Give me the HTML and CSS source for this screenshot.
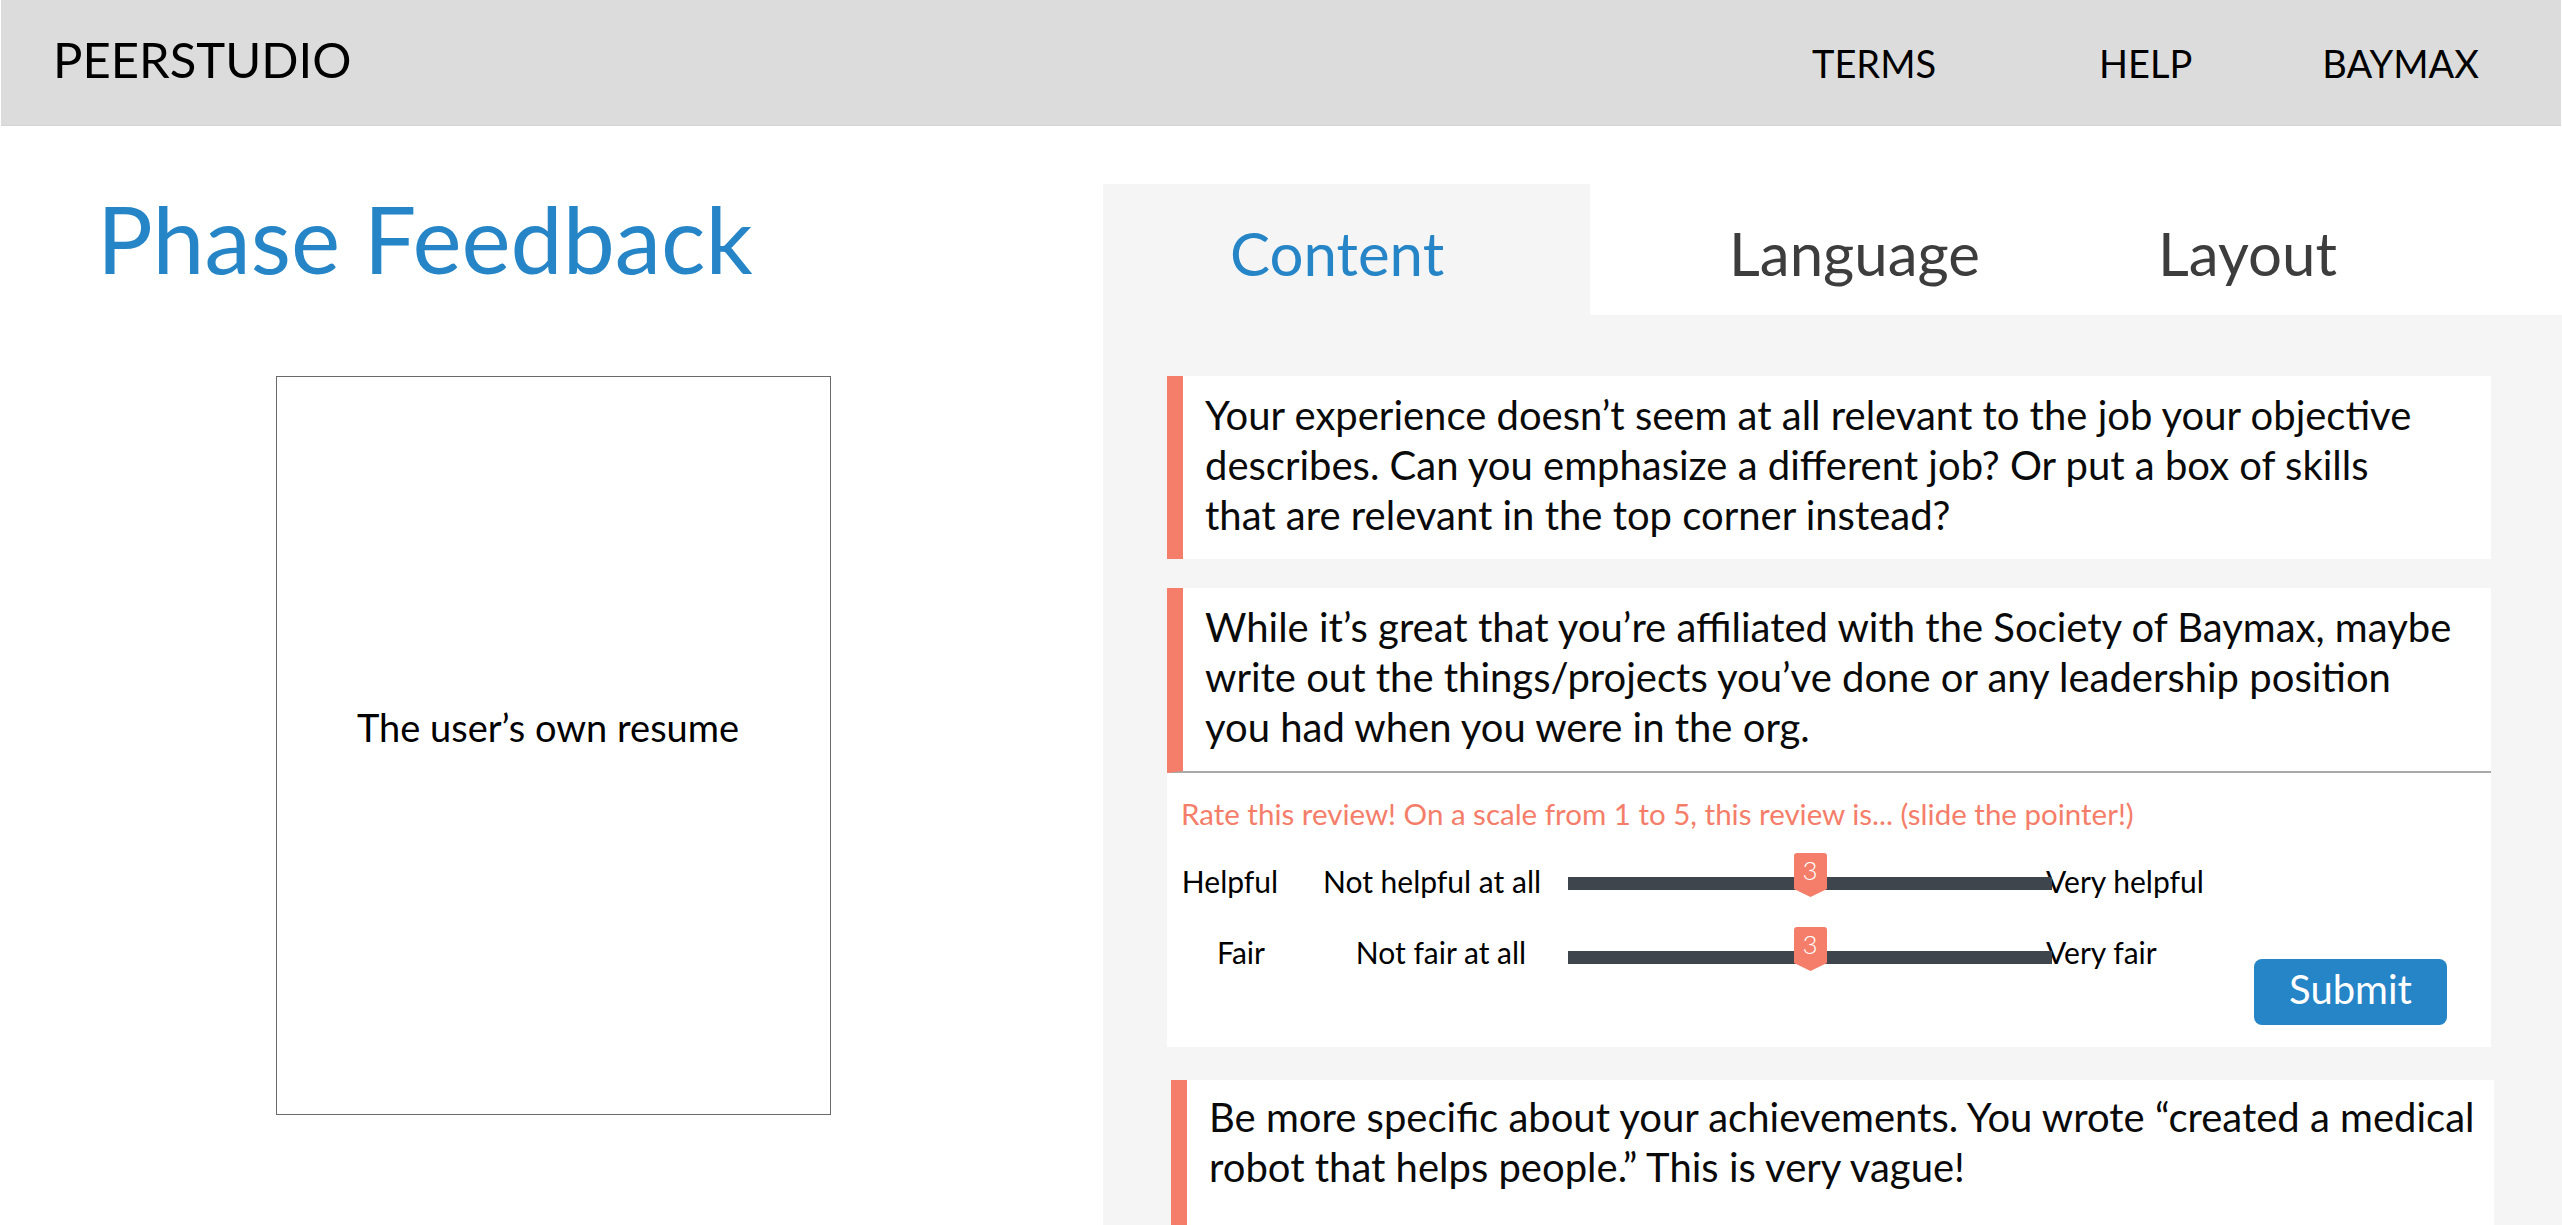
FILE: index.html
```html
<!DOCTYPE html>
<html lang="en">
<head>
<meta charset="utf-8">
<title>PeerStudio – Phase Feedback</title>
<link rel="stylesheet" href="styles.css">
</head>
<body>
<header class="topbar">
  <div class="brand">PEERSTUDIO</div>
  <nav class="nav">
    <a class="nav-link">TERMS</a>
    <a class="nav-link nav-help">HELP</a>
    <a class="nav-link nav-user">BAYMAX</a>
  </nav>
</header>
<main class="page">
  <section class="left">
    <h1 class="title">Phase Feedback</h1>
    <div class="resume"><span class="resume-text">The user’s own resume</span></div>
  </section>
  <section class="panel">
    <div class="tabs">
      <div class="tab tab-active">Content</div>
      <div class="tab tab-lang">Language</div>
      <div class="tab tab-layout">Layout</div>
    </div>
    <div class="feed">
      <article class="card">
        <p class="card-text">Your experience doesn’t seem at all relevant to the job your objective<br>describes. Can you emphasize a different job? Or put a box of skills<br>that are relevant in the top corner instead?</p>
      </article>
      <article class="card card-rated">
        <p class="card-text card-text-sep">While it’s great that you’re affiliated with the Society of Baymax, maybe<br>write out the things/projects you’ve done or any leadership position<br>you had when you were in the org.</p>
        <div class="rating">
          <div class="rating-title">Rate this review! On a scale from 1 to 5, this review is... (slide the pointer!)</div>
          <div class="rating-body">
            <div class="sliders">
              <div class="slider-row">
                <span class="lbl lbl-a">Helpful</span>
                <span class="lbl lbl-b">Not helpful at all</span>
                <div class="track">
                  <div class="thumb">
                    <svg class="thumb-shape" width="33" height="44" viewBox="0 0 33 44"><path d="M3 0 H30 Q33 0 33 3 V36 L16.5 44 L0 36 V3 Q0 0 3 0 Z" fill="#f47e69"/></svg>
                    <span class="thumb-val">3</span>
                  </div>
                </div>
                <span class="lbl lbl-c">Very helpful</span>
              </div>
              <div class="slider-row slider-row-alt">
                <span class="lbl lbl-a">Fair</span>
                <span class="lbl lbl-b">Not fair at all</span>
                <div class="track">
                  <div class="thumb">
                    <svg class="thumb-shape" width="33" height="44" viewBox="0 0 33 44"><path d="M3 0 H30 Q33 0 33 3 V36 L16.5 44 L0 36 V3 Q0 0 3 0 Z" fill="#f47e69"/></svg>
                    <span class="thumb-val">3</span>
                  </div>
                </div>
                <span class="lbl lbl-c">Very fair</span>
              </div>
            </div>
            <button class="submit">Submit</button>
          </div>
        </div>
      </article>
      <article class="card card-last">
        <p class="card-text">Be more specific about your achievements. You wrote “created a medical<br>robot that helps people.” This is very vague!</p>
      </article>
    </div>
  </section>
</main>
</body>
</html>
```

FILE: styles.css
```css
html, body {
  margin: 0;
  padding: 0;
  overflow: hidden;
  background: #ffffff;
}

body {
  font-family: Lato, "Open Sans", "Liberation Sans", sans-serif;
  color: #000;
}

/* ---------- top bar ---------- */
.topbar {
  display: flex;
  align-items: baseline;
  height: 126px;
  box-sizing: border-box;
  margin: 0 1px;
  padding: 35px 82px 0 52px;
  background: #dcdcdc;
  border-bottom: 1px solid #d3d3d3;
}

.brand {
  font-size: 49px;
  line-height: 49px;
  color: #000;
}

.nav {
  margin-left: auto;
  display: flex;
  align-items: baseline;
}

.nav-link {
  font-size: 38px;
  line-height: 38px;
  color: #000;
}

.nav-help { margin-left: 163px; }
.nav-user { margin-left: 130px; }

/* ---------- page ---------- */
.page {
  display: flex;
  align-items: flex-start;
}

.left {
  width: 1103px;
  flex: none;
}

.title {
  margin: 66px 0 0 0;
  padding-left: 97px;
  font-size: 93px;
  line-height: 93px;
  font-weight: 400;
  color: #2585c7;
}

.resume {
  margin: 91px 0 0 276px;
  width: 555px;
  height: 739px;
  box-sizing: border-box;
  border: 1px solid #6a6a6a;
  display: flex;
  align-items: center;
  justify-content: center;
  padding: 0 11px 37px 0;
}

.resume-text {
  font-size: 38px;
  line-height: 46px;
}

/* ---------- right panel ---------- */
.panel {
  flex: 1;
  margin-top: 58px;
  min-width: 0;
}

.tabs {
  display: flex;
  height: 131px;
}

.tab {
  font-size: 60px;
  line-height: 72px;
  padding-top: 33px;
  box-sizing: border-box;
  color: #3d3d3d;
}

.tab-active {
  width: 487px;
  padding-left: 127px;
  background: #f5f5f5;
  color: #2585c7;
}

.tab-lang {
  width: 565px;
  padding-left: 139px;
}

.tab-layout {
  flex: 1;
  padding-left: 3px;
}

.feed {
  background: #f5f5f5;
  padding: 61px 71px 0 64px;
  height: 1000px;
}

.card {
  background: #fff;
  margin: 0 0 29px 0;
}

.card-text {
  margin: 0;
  border-left: 16px solid #f47e69;
  padding: 14px 0 19px 22px;
  font-size: 40px;
  line-height: 50px;
  color: #0a0a0a;
  white-space: nowrap;
  overflow: hidden;
}

.card-rated {
  margin-bottom: 33px;
}

.card-text-sep {
  border-bottom: 2px solid #a9a9a9;
}

.card-last {
  margin-left: 4px;
  margin-right: -3px;
}

.card-last .card-text {
  padding-top: 12px;
  padding-bottom: 60px;
}

/* ---------- rating ---------- */
.rating {
  padding: 24px 0 0 14px;
}

.rating-title {
  font-size: 29.5px;
  line-height: 34px;
  color: #f47e69;
}

.rating-body {
  display: flex;
}

.sliders {
  padding-bottom: 73px;
}

.slider-row {
  display: flex;
  align-items: flex-start;
  height: 44px;
  margin-top: 28px;
}

.slider-row-alt {
  margin-top: 27px;
}

.lbl {
  font-size: 30px;
  line-height: 44px;
  white-space: nowrap;
  box-sizing: border-box;
}

.lbl-a {
  width: 98px;
  text-align: center;
}

.lbl-b {
  width: 214px;
  margin-left: 44px;
  text-align: center;
}

.slider-row-alt .lbl-a,
.slider-row-alt .lbl-b {
  padding-left: 22px;
}

.track {
  position: relative;
  z-index: 1;
  width: 484px;
  height: 13px;
  margin: 18px 0 0 31px;
  background: #3e454c;
  flex: none;
}

.slider-row-alt .track {
  margin-top: 21px;
}

.lbl-c {
  margin-left: -6px;
}

.thumb {
  position: absolute;
  left: calc(50% - 16.5px);
  top: -24px;
  width: 33px;
  height: 44px;
}

.thumb-shape {
  display: block;
}

.thumb-val {
  position: absolute;
  left: 0;
  top: 0;
  width: 33px;
  height: 36px;
  font-size: 26px;
  font-weight: 300;
  line-height: 34px;
  text-align: center;
  color: #fff;
}

.submit {
  align-self: flex-end;
  margin: 0 44px 22px auto;
  width: 193px;
  height: 66px;
  padding: 0 0 6px 0;
  border: none;
  border-radius: 8px;
  background: #2585c7;
  color: #fff;
  font-family: Lato, "Open Sans", "Liberation Sans", sans-serif;
  font-size: 40px;
  line-height: 60px;
}
```
